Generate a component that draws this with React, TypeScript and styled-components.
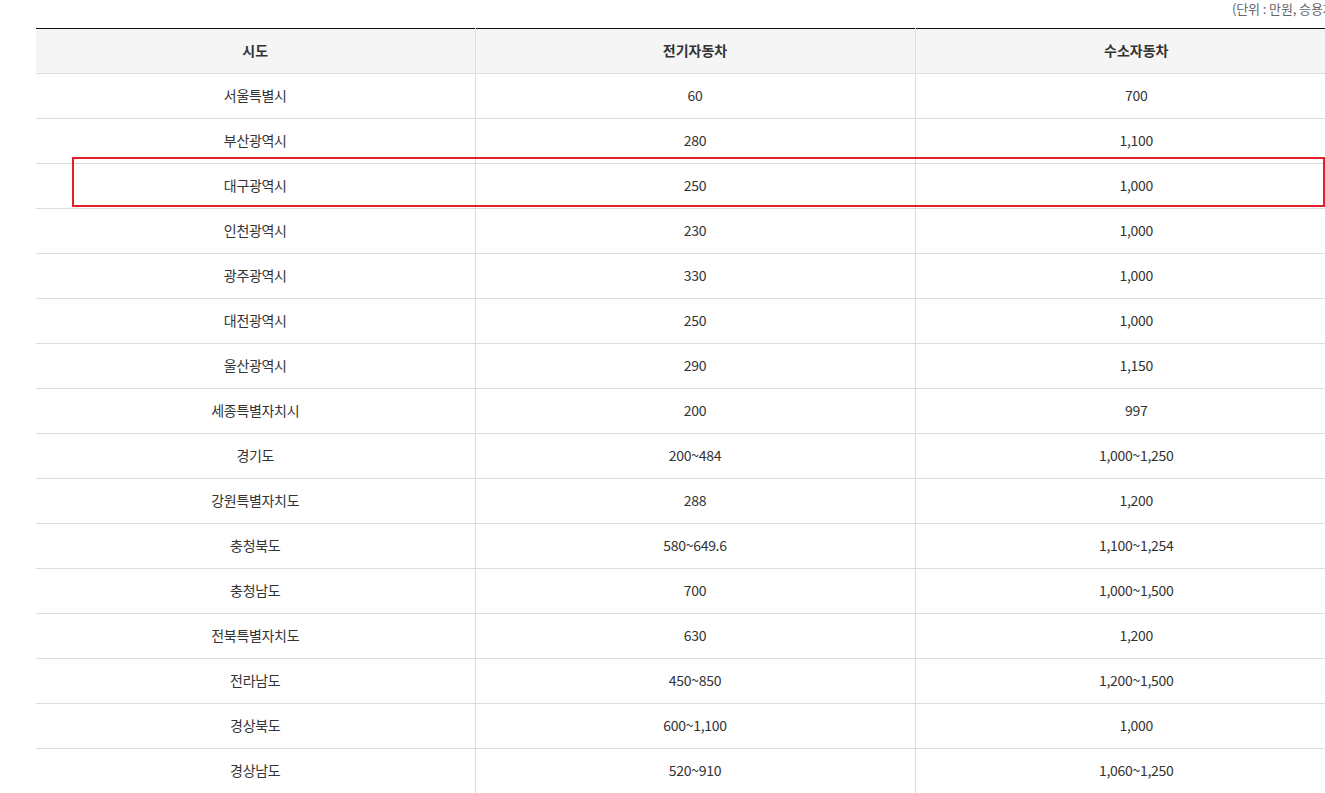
import React from "react";
import styled, { createGlobalStyle } from "styled-components";

const Global = createGlobalStyle`
  html, body { margin: 0; padding: 0; overflow: hidden; background: #fff; }
  body { font-family: "Noto Sans CJK KR", "Noto Sans", sans-serif; color: #333; }
`;

const Page = styled.div`
  padding-left: 36px;
  width: 1321px;
`;

const Unit = styled.div`
  height: 28px;
  display: flex;
  justify-content: flex-end;
  align-items: flex-start;
  font-size: 13px;
  line-height: 17px;
  color: #666;
  letter-spacing: -0.1px;
  padding-right: 18px;
  white-space: nowrap;
`;

const Wrap = styled.div`
  position: relative;
`;

const Table = styled.table`
  width: 1321px;
  border-collapse: collapse;
  table-layout: fixed;
  border-top: 1px solid #111;
`;

const Th = styled.th`
  height: 42px;
  padding: 0 0 2px;
  background: #f5f5f5;
  font-size: 14px;
  font-weight: 700;
  color: #333;
  text-align: center;
  border-bottom: 1px solid #ddd;
  & + & { border-left: 1px solid #ddd; }
`;

const Td = styled.td`
  height: 42px;
  padding: 0 0 2px;
  font-size: 14px;
  color: #333;
  text-align: center;
  border-bottom: 1px solid #ddd;
  letter-spacing: -0.3px;
  & + & { border-left: 1px solid #ddd; }
`;

const Highlight = styled.div`
  position: absolute;
  left: 36px;
  top: 129px;
  width: 1249px;
  height: 46px;
  border: 2px solid #e3202a;
  pointer-events: none;
`;

const rows: [string, string, string][] = [
  ["서울특별시", "60", "700"],
  ["부산광역시", "280", "1,100"],
  ["대구광역시", "250", "1,000"],
  ["인천광역시", "230", "1,000"],
  ["광주광역시", "330", "1,000"],
  ["대전광역시", "250", "1,000"],
  ["울산광역시", "290", "1,150"],
  ["세종특별자치시", "200", "997"],
  ["경기도", "200~484", "1,000~1,250"],
  ["강원특별자치도", "288", "1,200"],
  ["충청북도", "580~649.6", "1,100~1,254"],
  ["충청남도", "700", "1,000~1,500"],
  ["전북특별자치도", "630", "1,200"],
  ["전라남도", "450~850", "1,200~1,500"],
  ["경상북도", "600~1,100", "1,000"],
  ["경상남도", "520~910", "1,060~1,250"],
];

export default function App() {
  return (
    <>
      <Global />
      <Page>
        <Unit>(단위 : 만원, 승용차)</Unit>
        <Wrap>
          <Table>
            <colgroup>
              <col style={{ width: 439 }} />
              <col style={{ width: 440 }} />
              <col />
            </colgroup>
            <thead>
              <tr>
                <Th>시도</Th>
                <Th>전기자동차</Th>
                <Th>수소자동차</Th>
              </tr>
            </thead>
            <tbody>
              {rows.map((r) => (
                <tr key={r[0]}>
                  <Td>{r[0]}</Td>
                  <Td>{r[1]}</Td>
                  <Td>{r[2]}</Td>
                </tr>
              ))}
            </tbody>
          </Table>
          <Highlight />
        </Wrap>
      </Page>
    </>
  );
}
